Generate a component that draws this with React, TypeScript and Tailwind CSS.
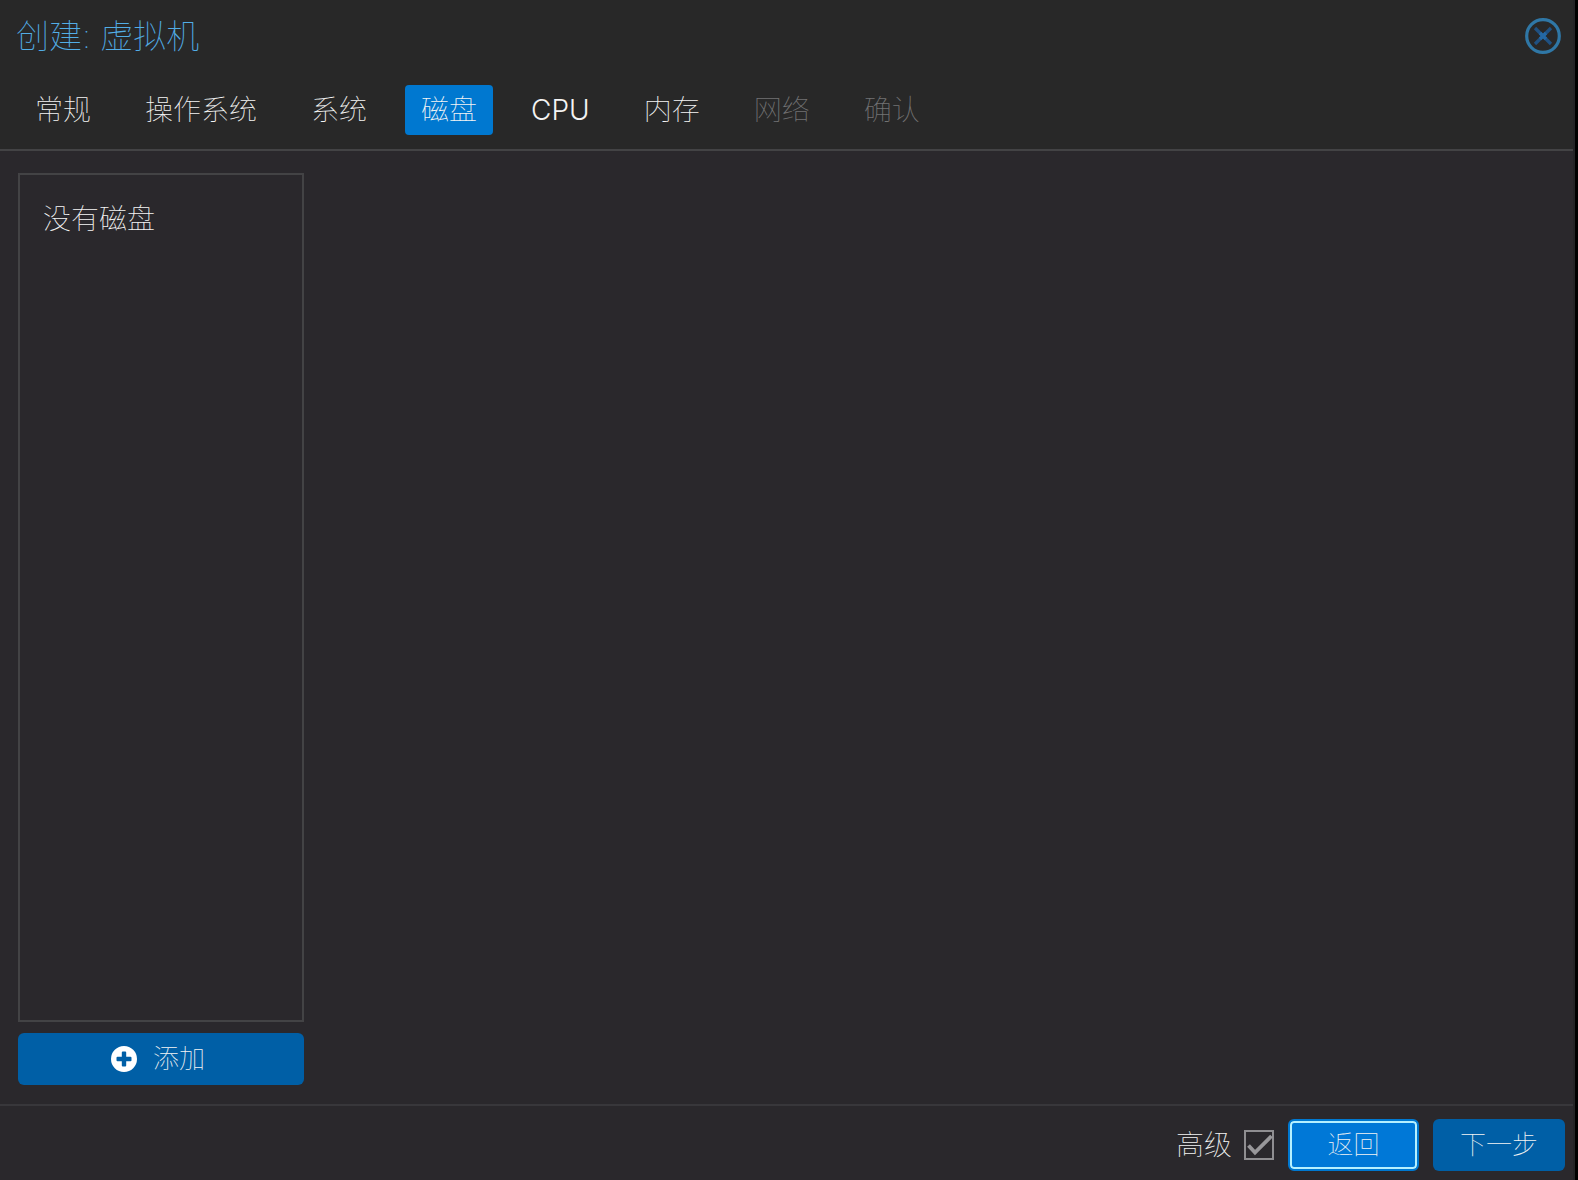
import { useState } from 'react';

type Tab = { label: string; disabled?: boolean };

const tabs: Tab[] = [
  { label: '常规' },
  { label: '操作系统' },
  { label: '系统' },
  { label: '磁盘' },
  { label: 'CPU' },
  { label: '内存' },
  { label: '网络', disabled: true },
  { label: '确认', disabled: true },
];

function CloseIcon() {
  return (
    <svg viewBox="0 0 36 36" className="size-9" fill="none" aria-hidden="true">
      <circle cx="18" cy="18" r="16.3" stroke="#2f77a6" strokeWidth="3.2" />
      <path d="M10 10 26 26M26 10 10 26" stroke="#1f5182" strokeWidth="3.2" />
      <path d="M15 15 21 21M21 15 15 21" stroke="#2468a4" strokeWidth="3.4" />
    </svg>
  );
}

function PlusCircleIcon() {
  return (
    <svg viewBox="0 0 26 26" className="size-[26px]" aria-hidden="true">
      <path
        fillRule="evenodd"
        fill="#ffffff"
        d="M13 0a13 13 0 1 0 0 26 13 13 0 0 0 0-26ZM11.8 5.5h2.4a1 1 0 0 1 1 1v4.3h4.3a1 1 0 0 1 1 1v2.4a1 1 0 0 1-1 1h-4.3v4.3a1 1 0 0 1-1 1h-2.4a1 1 0 0 1-1-1v-4.3H6.5a1 1 0 0 1-1-1v-2.4a1 1 0 0 1 1-1h4.3V6.5a1 1 0 0 1 1-1Z"
      />
    </svg>
  );
}

export default function App() {
  const [active, setActive] = useState('磁盘');
  const [advanced, setAdvanced] = useState(true);

  return (
    <div className="flex min-h-screen bg-black pr-[3px] font-['Inter','Noto_Sans_CJK_SC',sans-serif] text-[28px] leading-10 font-thin text-[#f4f4f4]">
      <main className="flex min-w-0 grow flex-col border-r-2 border-[#242426] bg-[#2a282c]">
        <header className="border-b-2 border-[#434345] bg-[#282828]">
          <div className="flex h-[72px] items-center justify-between pr-3 pl-4">
            <h1 className="text-[33px] text-[#52ade6]">创建: 虚拟机</h1>
            <button type="button" aria-label="关闭">
              <CloseIcon />
            </button>
          </div>
          <nav className="flex gap-[22px] pt-[13px] pb-3.5 pl-[19px]">
            {tabs.map((t) => (
              <button
                key={t.label}
                type="button"
                disabled={t.disabled}
                onClick={() => setActive(t.label)}
                className={
                  t.disabled
                    ? 'h-[50px] rounded px-4 text-[#737374]'
                    : t.label === active
                      ? 'h-[50px] rounded bg-[#0078d0] px-4'
                      : t.label === 'CPU'
                        ? 'h-[50px] rounded px-4 font-light'
                        : 'h-[50px] rounded px-4'
                }
              >
                {t.label}
              </button>
            ))}
          </nav>
        </header>

        <section className="flex grow flex-col pt-[22px] pb-[19px] pl-[18px]">
          <div className="w-[286px] grow border-2 border-[#434345] px-[23px] pt-6">没有磁盘</div>
          <button
            type="button"
            className="mt-[11px] flex h-[52px] w-[286px] items-center justify-center gap-4 rounded-md bg-[#005fa6] pr-1.5 text-[26px]"
          >
            <PlusCircleIcon />
            添加
          </button>
        </section>

        <footer className="flex items-center justify-end border-t-2 border-[#38373b] pt-[13px] pr-2 pb-[9px]">
          <label htmlFor="advanced" className="mr-3">
            高级
          </label>
          <span className="relative mr-3.5 flex size-[30px]">
            <input
              id="advanced"
              type="checkbox"
              checked={advanced}
              onChange={(e) => setAdvanced(e.target.checked)}
              className="size-full appearance-none border-2 border-[#8f8e91]"
            />
            {advanced && (
              <svg viewBox="0 0 30 30" className="pointer-events-none absolute inset-0" fill="none" aria-hidden="true">
                <path d="M4.5 15.5 11 22.5 27.5 6" stroke="#98979a" strokeWidth="3.8" />
              </svg>
            )}
          </span>
          <button
            type="button"
            className="mr-3.5 h-[52px] w-[131px] rounded-md border-2 border-[#0078d0] bg-[#0078d7] text-[26px] leading-none inset-ring-2 inset-ring-[#b5f0ff]"
          >
            返回
          </button>
          <button type="button" className="h-[52px] w-[132px] rounded-md bg-[#005fa6] text-[26px] leading-none">
            下一步
          </button>
        </footer>
      </main>
    </div>
  );
}
